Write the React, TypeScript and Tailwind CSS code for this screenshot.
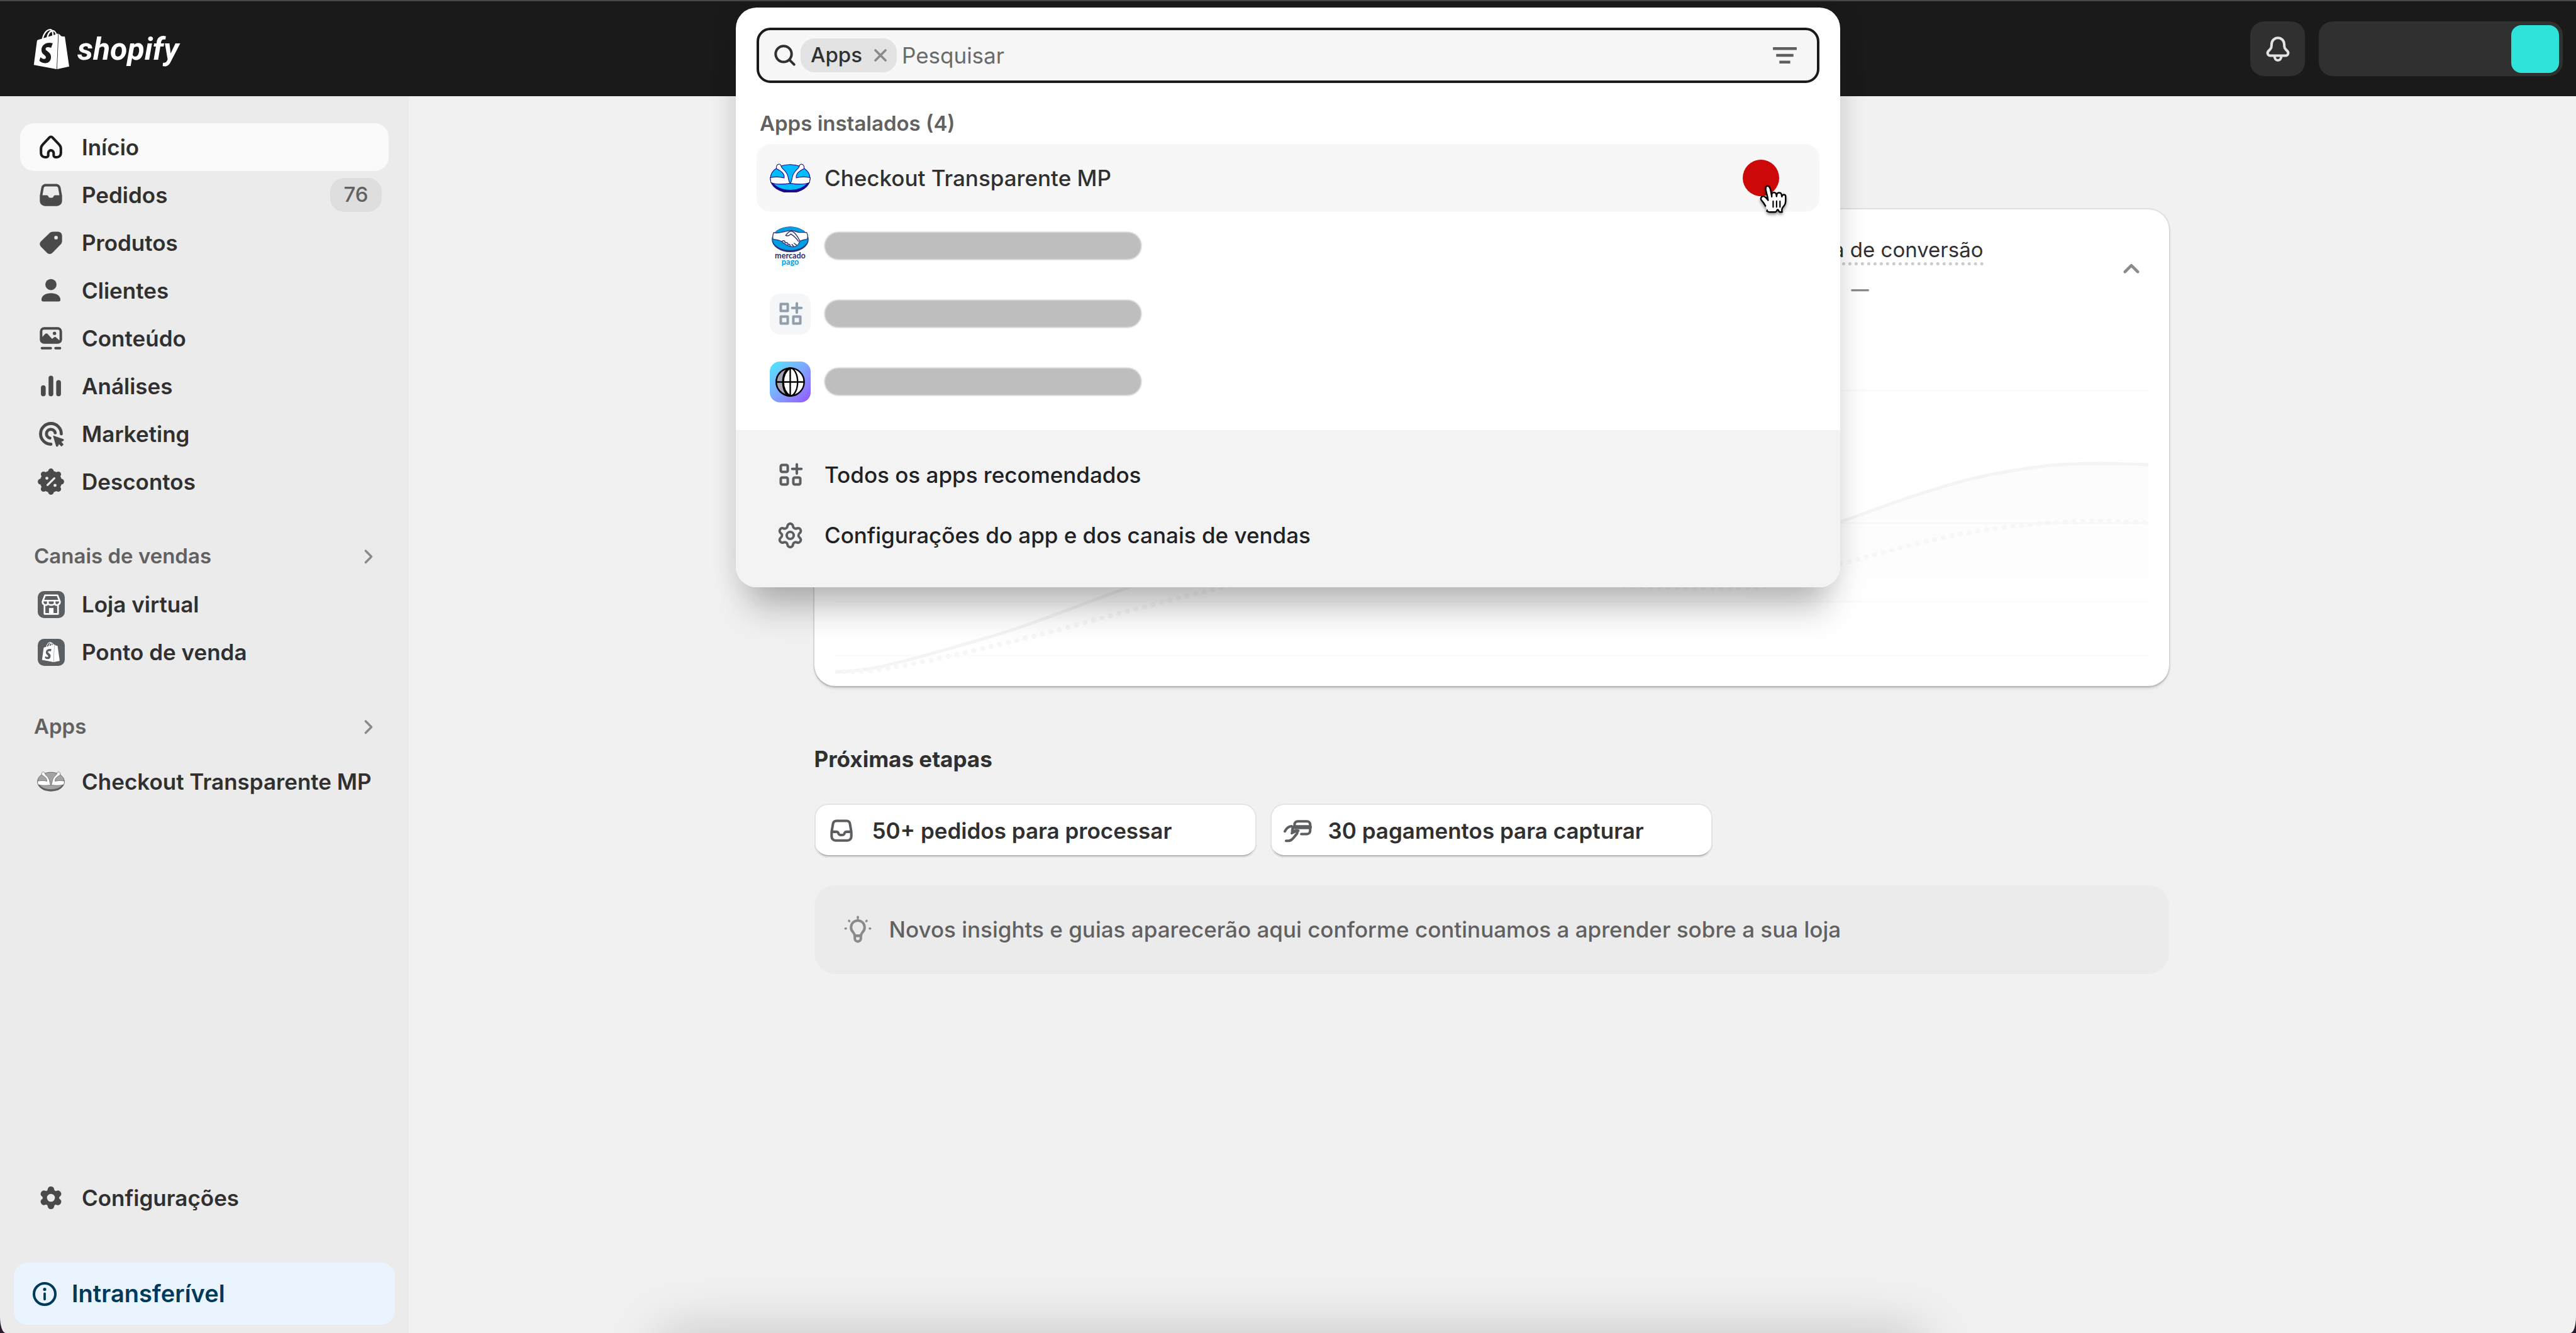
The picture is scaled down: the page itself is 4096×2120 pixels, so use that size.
import type { ReactNode } from "react";
import { Settings } from "lucide-react";
import { SiShopify } from "react-icons/si";

type IconProps = { className?: string };

function Icon({ className = "size-[54px]", children }: IconProps & { children: ReactNode }) {
  return (
    <svg
      viewBox="0 0 20 20"
      className={`shrink-0 ${className}`}
      fill="none"
      stroke="currentColor"
      strokeWidth="1.5"
      strokeLinecap="round"
      strokeLinejoin="round"
      aria-hidden="true"
    >
      {children}
    </svg>
  );
}

const HomeIcon = () => (
  <Icon>
    <path d="M9.2 4.2a1.1 1.1 0 0 1 1.6 0l4.1 4.4c.6.6.95 1.4.95 2.3v2.7a2.3 2.3 0 0 1-2.3 2.3h-.95a1 1 0 0 1-1-1v-1.4a1.6 1.6 0 0 0-3.2 0v1.4a1 1 0 0 1-1 1h-.95a2.3 2.3 0 0 1-2.3-2.3v-2.7c0-.9.35-1.7.95-2.3z" />
  </Icon>
);

const OrdersIcon = () => (
  <Icon>
    <path
      fill="currentColor"
      stroke="none"
      fillRule="evenodd"
      d="M6.9 3.5h6.2c1.3 0 2.35.9 2.6 2.2l.75 4.2c.05.25.1.5.1.8v2.8a3.05 3.05 0 0 1-3.05 3.05h-7A3.05 3.05 0 0 1 3.45 13.5v-2.8c0-.3.05-.55.1-.8l.75-4.2c.25-1.3 1.3-2.2 2.6-2.2zM6.9 5c-.6 0-1.05.4-1.15 1L5 10.15h2.5c.5 0 .8.3 1 .8.15.4.4.7.8.7h1.4c.4 0 .65-.3.8-.7.2-.5.5-.8 1-.8H15L14.25 6c-.1-.6-.55-1-1.15-1z"
    />
  </Icon>
);

const TagIcon = () => (
  <Icon>
    <path
      fill="currentColor"
      stroke="none"
      fillRule="evenodd"
      d="M11.3 3.5h2.9a2.35 2.35 0 0 1 2.35 2.35v3.1c0 .8-.3 1.55-.85 2.1l-4.9 4.95c-.85.85-2.2.85-3.05 0l-3.7-3.7a2.15 2.15 0 0 1 0-3.05l5.1-4.9c.6-.55 1.35-.85 2.15-.85zM13 8.05a1.05 1.05 0 1 0 0-2.1 1.05 1.05 0 0 0 0 2.1z"
    />
  </Icon>
);

const PersonIcon = () => (
  <Icon>
    <g fill="currentColor" stroke="none">
      <circle cx="10" cy="6.5" r="3.3" />
      <path d="M4.4 15.5c0-2.4 2.5-3.9 5.6-3.9s5.6 1.5 5.6 3.9c0 .6-.4 1-1 1H5.4c-.6 0-1-.4-1-1z" />
    </g>
  </Icon>
);

const ContentIcon = () => (
  <Icon>
    <rect x="4.2" y="4.2" width="11.6" height="8.3" rx="1.8" />
    <path
      fill="currentColor"
      stroke="none"
      d="M4.2 10 6.6 7.4c.4-.4 1-.4 1.400 0l2.7 3 1-.9c.4-.4 1-.4 1.4 0l2.7 2.4-.8.8H5z"
    />
    <circle cx="12.1" cy="7.1" r="1" fill="currentColor" stroke="none" />
    <path d="M4.7 15.8h5.2M12.7 15.8h2.6" />
  </Icon>
);

const BarsIcon = () => (
  <Icon>
    <path strokeWidth="2.8" d="M5.5 10.9v3.7M10 5.3v9.3M14.5 7.9v6.7" />
  </Icon>
);

const TargetIcon = () => (
  <Icon>
    <path strokeWidth="1.8" d="M10 16.1A6.1 6.1 0 1 1 16.1 10" />
    <path strokeWidth="1.8" d="M9.4 12.5a2.6 2.6 0 1 1 3.1-3.1" />
    <path
      fill="currentColor"
      strokeWidth="0.6"
      d="m11.6 11.4 5.5 1.9c.3.1.3.5 0 .6l-1.5.7 1.5 1.6-.9.9-1.5-1.6-.8 1.6c-.1.3-.5.3-.6 0z"
    />
  </Icon>
);

const DiscountIcon = () => (
  <Icon>
    <g fill="currentColor" stroke="none">
      <circle cx="10" cy="10" r="6.4" />
      {[0, 45, 90, 135, 180, 225, 270, 315].map((angle) => (
        <circle key={angle} cx="10" cy="3.9" r="1.65" transform={`rotate(${angle} 10 10)`} />
      ))}
    </g>
    <g className="stroke-[#ebebeb]">
      <path strokeWidth="1.2" d="m8 12 4-4" />
      <path strokeWidth="1.8" d="M7.6 8h.01M12.4 12.2h.01" />
    </g>
  </Icon>
);

const StoreIcon = () => (
  <span className="flex size-[54px] shrink-0 items-center justify-center">
    <svg viewBox="0 0 48 48" className="size-[43px]" fill="none" aria-hidden="true">
      <rect width="48" height="48" rx="11" fill="#5c5f62" />
      <path
        d="M13 7.5h22l4.5 11.5c0 2.5-1.5 4.5-3.5 5.2V40.5H12V24.200c-2-.7-3.500-2.700-3.500-5.200z"
        fill="#5c5f62"
        stroke="#fff"
        strokeWidth="3"
        strokeLinejoin="round"
      />
      <path
        d="M8.5 17h31M18 17.500v4c0 2.500-2 3.500-4.500 3.500M30 17.500v4c0 2.500 2 3.500 4.500 3.500M18 21c0 5 12 5 12 0"
        stroke="#fff"
        strokeWidth="3"
      />
      <path d="M20 30h8v10h-8z" fill="#fff" />
    </svg>
  </span>
);

const PosIcon = () => (
  <span className="flex size-[54px] shrink-0 items-center justify-center">
    <span className="flex size-[43px] items-center justify-center rounded-[10px] bg-[#5c5f62]">
      <SiShopify className="size-8 text-white" aria-hidden="true" />
    </span>
  </span>
);

function HandsLogo({ className, gray = false }: IconProps & { gray?: boolean }) {
  const dark = gray ? "#5c5f62" : "#1c0a8c";
  const main = gray ? "#a3a3a3" : "#00bcff";
  const arm =
    "M.8 25c9-2 18-1.500 24.500.5C26.500 18 19 12.500 12 9.500 10.500 5 13 .8 17 1.200c3 .4 2.600 4 4.500 6.500C26 13 30 15 32 23c1 5 1.500 9.500 4 12-10 1.500-25 2.500-34-1.500z";
  return (
    <svg viewBox="0 0 72 52" className={className} aria-hidden="true">
      <ellipse cx="36" cy="27" rx="35.5" ry="25" fill={dark} />
      <ellipse cx="36" cy="24.5" rx="34.5" ry="22.5" fill={main} stroke={dark} strokeWidth="1.2" />
      <g fill="#fff" stroke={dark} strokeWidth="1.2">
        <path d={arm} />
        <path d={arm} transform="matrix(-1 0 0 1 72 0)" />
      </g>
    </svg>
  );
}

const MercadoPagoLogo = () => (
  <svg viewBox="0 0 66 72" className="size-[65px]" aria-hidden="true">
    <ellipse cx="33" cy="24" rx="32.5" ry="22.5" fill="#2d3277" />
    <ellipse cx="33" cy="22.5" rx="31.5" ry="20.5" fill="#009ee3" />
    <path
      d="M4 12c7 2.500 14-1 20-2 5-.8 8-2 12-1.500 5 .6 8 2.800 13 3.300 5 .4 8-.8 13 .2 2.500 5 2.500 8 .5 12-5 .5-9 1-13 3.500-1 5-5 9-10 9.500-9 .5-17-5-22-9.500-4-2.500-9-3-14.500-3.500-1.500-4-.8-8 1-12z"
      fill="#fff"
      stroke="#2d3277"
      strokeWidth="1.4"
    />
    <path
      d="M25 17c4-5 7-8.500 12-7 7 4 10 11 13 17M25 17c3 2 7 0 9-2.500 5 3 10 8 13.500 13M19 27c4-2 5 1 5 3 4-1 5 1 5 3 3-1 4 1 4 3M40 31l4 3M36 33l3 3"
      fill="none"
      stroke="#2d3277"
      strokeWidth="1.6"
      strokeLinecap="round"
    />
    <text x="33" y="58" textAnchor="middle" fontFamily="Lato, sans-serif" fontWeight="700" fontSize="14" fill="#2d3277">
      mercado
    </text>
    <text x="33" y="69" textAnchor="middle" fontFamily="Lato, sans-serif" fontWeight="700" fontSize="14" fill="#009ee3">
      pago
    </text>
  </svg>
);

const AppsGridIcon = ({ className, sharp = false }: IconProps & { sharp?: boolean }) => (
  <Icon className={className}>
    <rect x="4.25" y="4.25" width="4.1" height="4.1" rx={sharp ? 0 : 0.8} />
    <rect x="4.25" y="11.65" width="4.1" height="4.1" rx={sharp ? 0 : 0.8} />
    <rect x="11.65" y="11.65" width="4.1" height="4.1" rx={sharp ? 0 : 0.8} />
    <path d="M13.7 3.9v5.4M11 6.6h5.4" />
  </Icon>
);

const GlobeLogo = () => (
  <span className="flex size-[65px] items-center justify-center rounded-2xl bg-linear-to-br from-[#3cebff] to-[#9250ff]">
    <svg viewBox="0 0 52 52" className="size-[47px]" fill="none" stroke="#000" strokeWidth="2.6" aria-hidden="true">
      <circle cx="26" cy="26" r="24.5" fill="#fff" />
      <path d="M26 1.500C10 3 1.500 14 1.500 26S10 49 26 50.500C10 40 10 12 26 1.500z" fill="#a5a3b5" />
      <ellipse cx="26" cy="26" rx="13" ry="24.5" />
      <path d="M26 1.500v49M1.500 26h49" />
    </svg>
  </span>
);

const Chevron = () => (
  <Icon className="size-[54px] text-[#8a8a8a]">
    <path strokeWidth="1.3" d="m8.3 6.700 3.400 3.400-3.400 3.400" />
  </Icon>
);

const PointerCursor = () => (
  <svg viewBox="7 7 18 18" className="size-[49px] drop-shadow-[0_3px_2px_rgba(0,0,0,0.4)]" aria-hidden="true">
    <path
      d="M11.300 20.400c-.3-.4-.6-1.100-1.200-2-.3-.5-1.200-1.500-1.500-1.900-.2-.4-.2-.6-.1-1 .1-.6.7-1.100 1.400-1.100.5 0 1 .4 1.400.7.2.2.5.6.7.8.2.2.2.3.4.5.2.3.3.5.2.1-.1-.5-.2-1.300-.4-2.100-.1-.6-.2-.7-.3-1.100-.1-.5-.2-.8-.3-1.300-.1-.3-.2-1.100-.3-1.500-.1-.5-.1-1.400.3-1.800.3-.3.9-.4 1.300-.2.5.3.8 1 .9 1.300.2.500.4 1.200.5 2 .2 1 .5 2.500.5 2.800 0-.4-.1-1.100 0-1.500.1-.3.300-.7.700-.8.300-.1.600-.1.900-.1.300.1.600.3.800.5.400.6.400 1.900.4 1.800.1-.4.1-1.200.3-1.600.1-.2.500-.4.700-.5.300-.1.700-.1 1 0 .2 0 .6.300.7.500.2.300.300 1.300.4 1.700 0 .1.100-.4.300-.7.400-.6 1.800-.8 1.900.6v2.300c0 .4-.1 1.300-.2 1.700-.1.300-.4 1-.7 1.400 0 0-1.100 1.200-1.200 1.800-.1.600-.1.600-.1 1s.1.900.1.900-.8.100-1.200 0c-.4-.1-.9-.8-1-1.100-.2-.3-.5-.3-.7 0-.2.400-.7 1.100-1.100 1.100-.7.100-2.100 0-3.100 0 0 0 0 .2-1-.2-1.400-.3-.3-.8-.8-1.100-1.100z"
      fill="#fff"
      stroke="#000"
      strokeWidth="0.9"
      strokeLinejoin="round"
    />
    <path d="M19.600 20.700v-3.400M17.600 20.700v-3.500M15.600 17.300v3.400" stroke="#000" strokeWidth="0.8" strokeLinecap="round" />
  </svg>
);

function NavItem({ icon, label, badge, active }: { icon: ReactNode; label: string; badge?: string; active?: boolean }) {
  return (
    <a
      href="#"
      aria-current={active ? "page" : undefined}
      className={`flex h-[76px] items-center gap-[22px] rounded-[22px] pr-[11px] pl-[22px] text-[35px] font-semibold whitespace-nowrap text-[#303030] ${active ? "bg-[#fafafa]" : ""}`}
    >
      <span className={active ? "text-[#1a1a1a]" : "text-[#4a4a4a]"}>{icon}</span>
      <span className="flex-1">{label}</span>
      {badge && (
        <span className="flex h-[54px] w-[82px] items-center justify-center rounded-[22px] bg-[#dedede] text-[33px] font-medium text-[#616161]">
          {badge}
        </span>
      )}
    </a>
  );
}

const SectionLabel = ({ children }: { children: ReactNode }) => (
  <button type="button" className="flex h-[76px] w-full items-center justify-between pr-[5px] pl-[22px] text-[33px] font-semibold text-[#616161]">
    {children}
    <Chevron />
  </button>
);

function Sidebar() {
  return (
    <nav aria-label="Principal" className="flex w-[650px] shrink-0 flex-col bg-[#ebebeb] px-[22px] pt-[43px] pb-[13px]">
      <div className="flex flex-1 flex-col px-[10px]">
        <NavItem icon={<HomeIcon />} label="Início" active />
        <NavItem icon={<OrdersIcon />} label="Pedidos" badge="76" />
        <NavItem icon={<TagIcon />} label="Produtos" />
        <NavItem icon={<PersonIcon />} label="Clientes" />
        <NavItem icon={<ContentIcon />} label="Conteúdo" />
        <NavItem icon={<BarsIcon />} label="Análises" />
        <NavItem icon={<TargetIcon />} label="Marketing" />
        <NavItem icon={<DiscountIcon />} label="Descontos" />
        <div className="mt-[43px]">
          <SectionLabel>Canais de vendas</SectionLabel>
          <NavItem icon={<StoreIcon />} label="Loja virtual" />
          <NavItem icon={<PosIcon />} label="Ponto de venda" />
        </div>
        <div className="mt-[43px] flex flex-col gap-[11px]">
          <SectionLabel>Apps</SectionLabel>
          <NavItem
            icon={
              <span className="flex size-[54px] items-center justify-center">
                <HandsLogo gray className="w-[44px]" />
              </span>
            }
            label="Checkout Transparente MP"
          />
        </div>
        <div className="mt-auto">
          <NavItem
            icon={
              <span className="flex size-[54px] items-center justify-center">
                <Settings className="size-[40px] fill-current [&>circle]:fill-[#ebebeb] [&>circle]:stroke-[#ebebeb]" strokeWidth={1.6} aria-hidden="true" />
              </span>
            }
            label="Configurações"
          />
        </div>
      </div>
      <button type="button" className="mt-[65px] flex h-[99px] items-center gap-4 rounded-[22px] bg-[#eaf4ff] pl-[22px] text-[38px] font-semibold text-[#003a5a]">
        <Icon>
          <circle cx="10" cy="10" r="6.3" />
          <path d="M10 9.800v3.300" strokeWidth="1.4" />
          <path d="M10 7.200h.01" strokeWidth="1.9" />
        </Icon>
        Intransferível
      </button>
    </nav>
  );
}

function Header() {
  return (
    <header className="flex h-[153px] shrink-0 items-center justify-between border-t-2 border-[#484848] bg-[#1a1a1a] pr-[21px] pl-[50px]">
      <a href="#" aria-label="shopify" className="flex items-center gap-[9px] text-white">
        <SiShopify className="size-[64px]" aria-hidden="true" />
        <span className="font-['Roboto',sans-serif] text-[50px] leading-[64px] font-bold italic">shopify</span>
      </a>
      <div className="flex items-center gap-[22px]">
        <button type="button" aria-label="Notificações" className="flex size-[87px] items-center justify-center rounded-[22px] bg-[#303030] text-[#e3e3e3]">
          <Icon>
            <path d="M10 3.400c-2 0-3.600 1.600-3.700 3.600l-.1 1.400c0 .7-.3 1.300-.8 1.800l-.9.900c-.7.700-.7 1 -.5 1.700.2.700.7 1.100 1.500 1.100h9c.8 0 1.300-.4 1.500-1.100.2-.7.200-1-.5-1.700l-.9-.9c-.5-.5-.8-1.100-.8-1.800L13.700 7c-.1-2-1.700-3.600-3.700-3.600z" />
            <path d="M8 14.200c0 1.300.8 2.500 2 2.500s2-1.200 2-2.500" />
          </Icon>
        </button>
        <button type="button" aria-label="Loja" className="flex h-[87px] w-[388px] items-center justify-end rounded-[22px] bg-[#303030] pr-[6px]">
          <span className="size-[76px] rounded-[16px] bg-[#2ee3da]" />
        </button>
      </div>
    </header>
  );
}

type Point = [number, number];

const currentPeriod: Point[] = [
  [0, 454], [59, 448], [151, 425], [290, 384], [470, 318], [600, 275],
  [1450, 265], [1599, 215], [1706, 177], [1810, 146], [1925, 126], [2012, 122], [2089, 124],
];

const previousPeriod: Point[] = [
  [0, 454], [60, 451], [151, 435], [307, 399], [462, 358], [618, 319], [750, 295],
  [1450, 320], [1599, 282], [1703, 254], [1810, 231], [1925, 217], [2012, 214], [2089, 216],
];

/** Smooth path through the points; each handle follows the slope between its neighbours. */
function smoothPath(points: Point[]) {
  const slope = points.map((_, i) => {
    const [x0, y0] = points[Math.max(i - 1, 0)];
    const [x1, y1] = points[Math.min(i + 1, points.length - 1)];
    return (y1 - y0) / (x1 - x0);
  });
  return points.reduce((path, [x, y], i) => {
    if (i === 0) return `M${x} ${y}`;
    const [px, py] = points[i - 1];
    const step = (x - px) / 3;
    return `${path}C${px + step} ${py + slope[i - 1] * step} ${x - step} ${y - slope[i] * step} ${x} ${y}`;
  }, "");
}

function ConversionChart() {
  return (
    <svg viewBox="0 0 2089 460" preserveAspectRatio="none" className="h-[460px] w-full" fill="none" aria-hidden="true">
      <defs>
        <linearGradient id="area" x1="0" y1="0" x2="0" y2="1">
          <stop offset="0" stopColor="#000" stopOpacity="0.014" />
          <stop offset="1" stopColor="#000" stopOpacity="0.004" />
        </linearGradient>
      </defs>
      <path d="M0 6h2089M0 217h2089" stroke="#fafafa" strokeWidth="3" />
      <path d="M0 342h2089M0 428h2089" stroke="#fcfcfc" strokeWidth="3" />
      <path d={`${smoothPath(currentPeriod.slice(6))}V342H1450z`} fill="url(#area)" />
      <path d={smoothPath(currentPeriod)} stroke="#f4f4f4" strokeWidth="5" />
      <path d={smoothPath(previousPeriod)} stroke="#f7f7f7" strokeWidth="8" strokeLinecap="round" strokeDasharray="0 14" />
    </svg>
  );
}

function NextStep({ icon, children }: { icon: ReactNode; children: ReactNode }) {
  return (
    <button
      type="button"
      className="flex h-[86px] w-[703px] items-center gap-[22px] rounded-[22px] bg-white pl-4 text-[35px] font-semibold text-[#303030] shadow-[inset_0_0_0_2px_#e3e3e3,inset_0_-4px_0_0_#b5b5b5]"
    >
      <span className="text-[#5c5f62]">{icon}</span>
      {children}
    </button>
  );
}

function Dashboard() {
  return (
    <main className="flex-1 bg-[#f1f1f1] pt-[180px] pr-[3px]">
      <div className="mx-auto w-full max-w-[2154px]">
        <section className="flex h-[758px] flex-col rounded-[33px] bg-white px-[33px] pt-[44px] pb-4 shadow-[0_3px_0_0_rgba(26,26,26,0.07),0_0_0_2px_rgba(26,26,26,0.08),0_4px_4px_0_rgba(0,0,0,0.12)]">
          <div className="flex items-start justify-end gap-[208px]">
            <div className="text-[33px] text-[#303030]">
              <a href="#" className="block border-b-[5px] border-dotted border-[#cccccc] leading-[40px]">
                Taxa de conversão
              </a>
              <p className="pl-[85px] text-[28px] leading-[76px] font-bold text-[#8a8a8a]">—</p>
            </div>
            <button type="button" aria-label="Recolher" className="mt-[23px] text-[#8a8a8a]">
              <Icon>
                <path strokeWidth="1.7" d="m6.200 12 3.800-3.800 3.800 3.800" />
              </Icon>
            </button>
          </div>
          <div className="mt-auto">
            <ConversionChart />
          </div>
        </section>

        <h2 className="mt-[89px] text-[35px] leading-[54px] font-bold text-[#303030]">Próximas etapas</h2>
        <div className="mt-[44px] flex gap-[22px]">
          <NextStep
            icon={
              <Icon>
                <path d="M6.900 4.250h6.200c.9 0 1.700.65 1.850 1.550l.75 4.300.1.800v2.600a2.300 2.300 0 0 1-2.300 2.300h-7a2.300 2.300 0 0 1-2.300-2.300v-2.600l.1-.8.75-4.300c.150-.9.950-1.550 1.850-1.550z" />
                <path d="M4.400 10.700h2.800c.4 0 .7.200.9.600l.3.700c.2.400.5.600.9.600h1.400c.4 0 .7-.2.9-.6l.3-.7c.2-.4.5-.6.9-.6h2.800" />
              </Icon>
            }
          >
            50+ pedidos para processar
          </NextStep>
          <NextStep
            icon={
              <Icon>
                <path d="M8.300 7.200V6.400a1.900 1.900 0 0 1 1.900-1.900h5.400a1.900 1.900 0 0 1 1.900 1.900v3.700a1.900 1.900 0 0 1-1.900 1.900h-3.300" />
                <path d="M8.500 8h8.800" strokeWidth="2.4" />
                <path d="M2.600 10.400c.8-1.600 2-2.900 4-3M3.300 16h1.500c1 0 1.800-.5 2.500-1.300l2.400-2.900c.6-.8-.2-1.700-1-1.300l-2 1" />
                <path d="M7.300 7.800l-.4 2.600c1.200-.3 2.400-.6 3.600-.3" />
              </Icon>
            }
          >
            30 pagamentos para capturar
          </NextStep>
        </div>

        <p className="mt-[44px] flex h-[141px] items-center gap-[23px] rounded-[33px] bg-[#ebebeb] px-[42px] text-[35px] font-[450] text-[#616161]">
          <Icon className="size-[54px] text-[#8a8a8a]">
            <path d="M8.100 13.300c0-.8-.4-1.400-.9-2a4 4 0 1 1 5.600 0c-.5.600-.9 1.200-.9 2z" />
            <path d="M8.200 13.500h3.600v1.500a1.800 1.800 0 0 1-3.600 0z" />
            <path strokeWidth="1.3" d="M10 2.300v.8M4.800 4.600l.2.200M15.200 4.600l-.2.200M2.700 9.200h.3M17 9.200h.3" />
          </Icon>
          Novos insights e guias aparecerão aqui conforme continuamos a aprender sobre a sua loja
        </p>
      </div>
    </main>
  );
}

const HiddenName = () => <span className="h-[44px] w-[504px] rounded-[22px] bg-[#bebebe] blur-[1px]" />;

function ResultRow({ logo, children, active }: { logo: ReactNode; children: ReactNode; active?: boolean }) {
  return (
    <li>
      <button
        type="button"
        className={`relative flex h-[108px] w-full items-center gap-[22px] rounded-[22px] px-[21px] text-left ${active ? "bg-[#f7f7f7]" : ""}`}
      >
        <span className="flex w-[65px] justify-center">{logo}</span>
        {children}
      </button>
    </li>
  );
}

function FooterAction({ icon, children }: { icon: ReactNode; children: ReactNode }) {
  return (
    <button type="button" className="flex h-[96px] items-center gap-[22px] px-[21px] text-[35px] font-[450] text-[#1f2124]">
      <span className="flex w-[65px] justify-center text-[#5c5f62]">{icon}</span>
      {children}
    </button>
  );
}

function SearchDialog() {
  return (
    <div className="absolute inset-x-0 top-[12px] flex justify-center">
      <div
        role="dialog"
        aria-label="Pesquisar"
        className="flex w-[1756px] flex-col overflow-hidden rounded-[33px] bg-white shadow-[0_54px_54px_-22px_rgba(26,26,26,0.28),0_0_44px_0_rgba(26,26,26,0.1)]"
      >
        <div className="px-[33px] pt-[32px] pb-[23px]">
          <div className="flex h-[88px] items-center rounded-[22px] border-4 border-[#1a1a1a] bg-[#f7f7f7] pr-[24px] pl-[12px] text-[35px]">
            <Icon className="size-[54px] text-[#303030]">
              <circle cx="10" cy="9.2" r="4.7" />
              <path d="m13.600 12.800 2.600 2.600" />
            </Icon>
            <span className="flex h-[54px] items-center gap-[19px] rounded-[22px] bg-[#e3e3e3] px-4 text-[33px] font-medium text-[#303030]">
              Apps
              <button type="button" aria-label="Remover filtro Apps" className="text-[#8a8a8a]">
                <svg viewBox="0 0 20 20" className="size-5" fill="none" stroke="currentColor" strokeWidth="3.6" strokeLinecap="round" aria-hidden="true">
                  <path d="m2 2 16 16M18 2 2 18" />
                </svg>
              </button>
            </span>
            <input
              type="search"
              aria-label="Pesquisar"
              placeholder="Pesquisar"
              className="ml-[8px] h-full min-w-0 flex-1 bg-transparent outline-none placeholder:text-[#6a6a6a]"
            />
            <button type="button" aria-label="Filtrar" className="text-[#5c5f62]">
              <Icon>
                <path strokeLinecap="butt" strokeWidth="1.7" d="M3 6h14M4.900 10h10.200M6.800 14h6.400" />
              </Icon>
            </button>
          </div>
          <h2 className="flex h-[97px] items-center pt-8 pl-[5px] text-[33px] font-semibold text-[#616161]">Apps instalados (4)</h2>
          <ul>
            <ResultRow logo={<HandsLogo className="w-[65px]" />} active>
              <span className="flex-1 text-[35px] font-[450] text-[#303030]">Checkout Transparente MP</span>
              <span className="relative mr-[43px] size-[58px] rounded-full bg-[#cc0808]">
                <span className="absolute top-[38px] left-[25px]">
                  <PointerCursor />
                </span>
              </span>
            </ResultRow>
            <ResultRow logo={<MercadoPagoLogo />}>
              <HiddenName />
            </ResultRow>
            <ResultRow
              logo={
                <span className="flex size-[65px] items-center justify-center rounded-2xl bg-[#f4f6f8] text-[#919eab]">
                  <AppsGridIcon sharp className="size-[54px]" />
                </span>
              }
            >
              <HiddenName />
            </ResultRow>
            <ResultRow logo={<GlobeLogo />}>
              <HiddenName />
            </ResultRow>
          </ul>
        </div>
        <div className="flex flex-col bg-[#f3f3f3] px-[33px] pt-[23px] pb-[35px]">
          <FooterAction icon={<AppsGridIcon className="size-[54px]" />}>Todos os apps recomendados</FooterAction>
          <FooterAction icon={<Settings className="size-[45px]" strokeWidth={2.1} aria-hidden="true" />}>
            Configurações do app e dos canais de vendas
          </FooterAction>
        </div>
      </div>
    </div>
  );
}

export default function App() {
  return (
    <div className="relative min-h-screen bg-[#2a1b30] font-['Inter',sans-serif]">
      <div className="flex min-h-screen flex-col overflow-hidden [border-bottom-left-radius:9px_26px] [border-bottom-right-radius:9px_26px]">
        <Header />
        <div className="relative flex flex-1 overflow-hidden">
          <Sidebar />
          <Dashboard />
          <div className="absolute right-[1040px] -bottom-[200px] left-[1050px] h-[200px] shadow-[0_0_90px_0_rgba(0,0,0,0.2)]" />
        </div>
      </div>
      <SearchDialog />
    </div>
  );
}
